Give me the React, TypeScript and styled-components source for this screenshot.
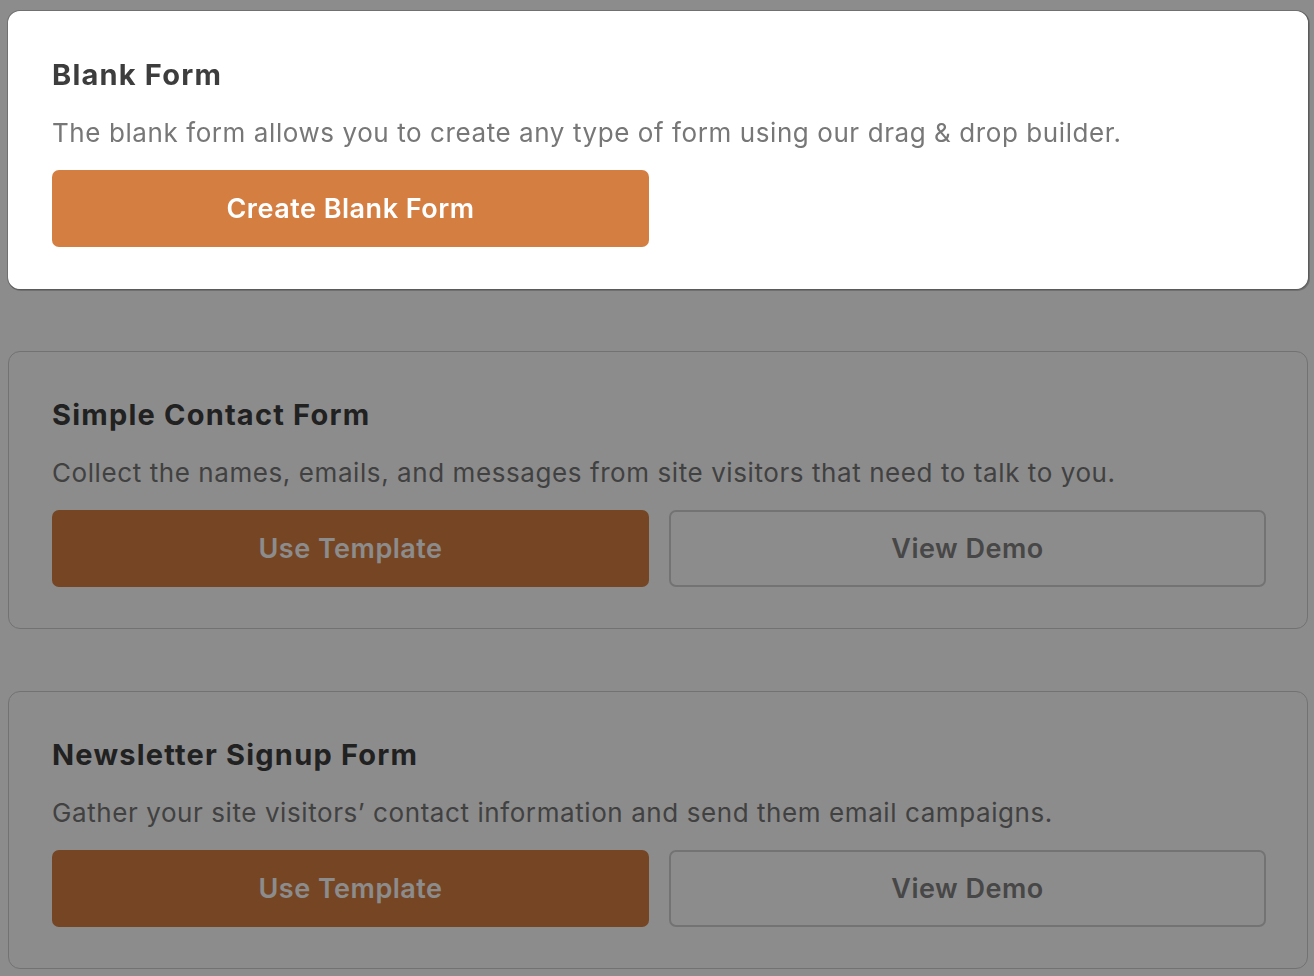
import { FC, ReactElement } from "react";
import styled, { createGlobalStyle, css } from "styled-components";

/*
    ====================================================== [Styles]======================================================
*/

const GlobalStyle = createGlobalStyle`
  html, body {
    margin: 0;
    padding: 0;
    background: #ffffff;
  }

  body {
    font-family: Inter, "Noto Sans", "Liberation Sans", sans-serif;
    -webkit-font-smoothing: antialiased;
  }
`;

const Page = styled.div`
  display: flex;
  flex-direction: column;
  gap: 62px;
  padding: 11px 6px 20px 8px;
`;

const Overlay = styled.div`
  position: fixed;
  inset: 0;
  background: rgba(0, 0, 0, 0.45);
  z-index: 10;
`;

const Card = styled.section<{ $highlighted?: boolean }>`
  position: relative;
  box-sizing: border-box;
  height: 278px;
  padding: 46px 41px 40px 43px;
  border: 1px solid #cfcfcf;
  border-radius: 12px;
  background: #ffffff;

  ${({ $highlighted }) =>
    $highlighted &&
    css`
      z-index: 20;
      border: 1px solid #ffffff;
      border-left-width: 2px;
      padding-left: 42px;
      box-shadow: 0 0 0 1px rgba(0, 0, 0, 0.2), 1px 1px 0 1px rgba(0, 0, 0, 0.2);
    `}
`;

const Title = styled.h2`
  margin: 0 0 26px;
  font-size: 29px;
  line-height: 34px;
  font-weight: 700;
  color: #3d3d3d;
  letter-spacing: 1.2px;
`;

const Description = styled.p`
  margin: 0 0 23px;
  font-size: 26px;
  line-height: 29px;
  font-weight: 400;
  color: #777777;
  letter-spacing: 0.58px;
  white-space: nowrap;
`;

const Actions = styled.div`
  display: grid;
  grid-template-columns: repeat(2, 1fr);
  gap: 20px;
`;

const Button = styled.button<{ $variant: "primary" | "secondary" }>`
  box-sizing: border-box;
  height: 77px;
  border-radius: 7px;
  font-family: inherit;
  font-size: 27px;
  font-weight: 600;
  letter-spacing: 0.5px;
  cursor: pointer;

  ${({ $variant }) =>
    $variant === "primary"
      ? css`
          border: none;
          background: #d57e42;
          color: #ffffff;
        `
      : css`
          border: 2px solid #d2d2d2;
          background: #ffffff;
          color: #818181;
        `}
`;

/*
    ====================================================== [Interfaces]======================================================
*/

interface ITemplate {
  title: string;
  description: string;
}

/*
    ====================================================== [Configs]======================================================
*/

const TEMPLATES: Array<ITemplate> = [
  {
    title: "Simple Contact Form",
    description:
      "Collect the names, emails, and messages from site visitors that need to talk to you.",
  },
  {
    title: "Newsletter Signup Form",
    description:
      "Gather your site visitors\u2019 contact information and send them email campaigns.",
  },
];

/*
    ====================================================== [App Component]======================================================
*/

const App: FC = (): ReactElement => {
  return (
    <>
      <GlobalStyle />
      <Overlay />
      <Page>
        <Card $highlighted>
          <Title>Blank Form</Title>
          <Description>
            The blank form allows you to create any type of form using our drag &amp; drop builder.
          </Description>
          <Actions>
            <Button $variant="primary">Create Blank Form</Button>
          </Actions>
        </Card>
        {TEMPLATES.map(({ title, description }) => (
          <Card key={title}>
            <Title>{title}</Title>
            <Description>{description}</Description>
            <Actions>
              <Button $variant="primary">Use Template</Button>
              <Button $variant="secondary">View Demo</Button>
            </Actions>
          </Card>
        ))}
      </Page>
    </>
  );
};

export default App;
